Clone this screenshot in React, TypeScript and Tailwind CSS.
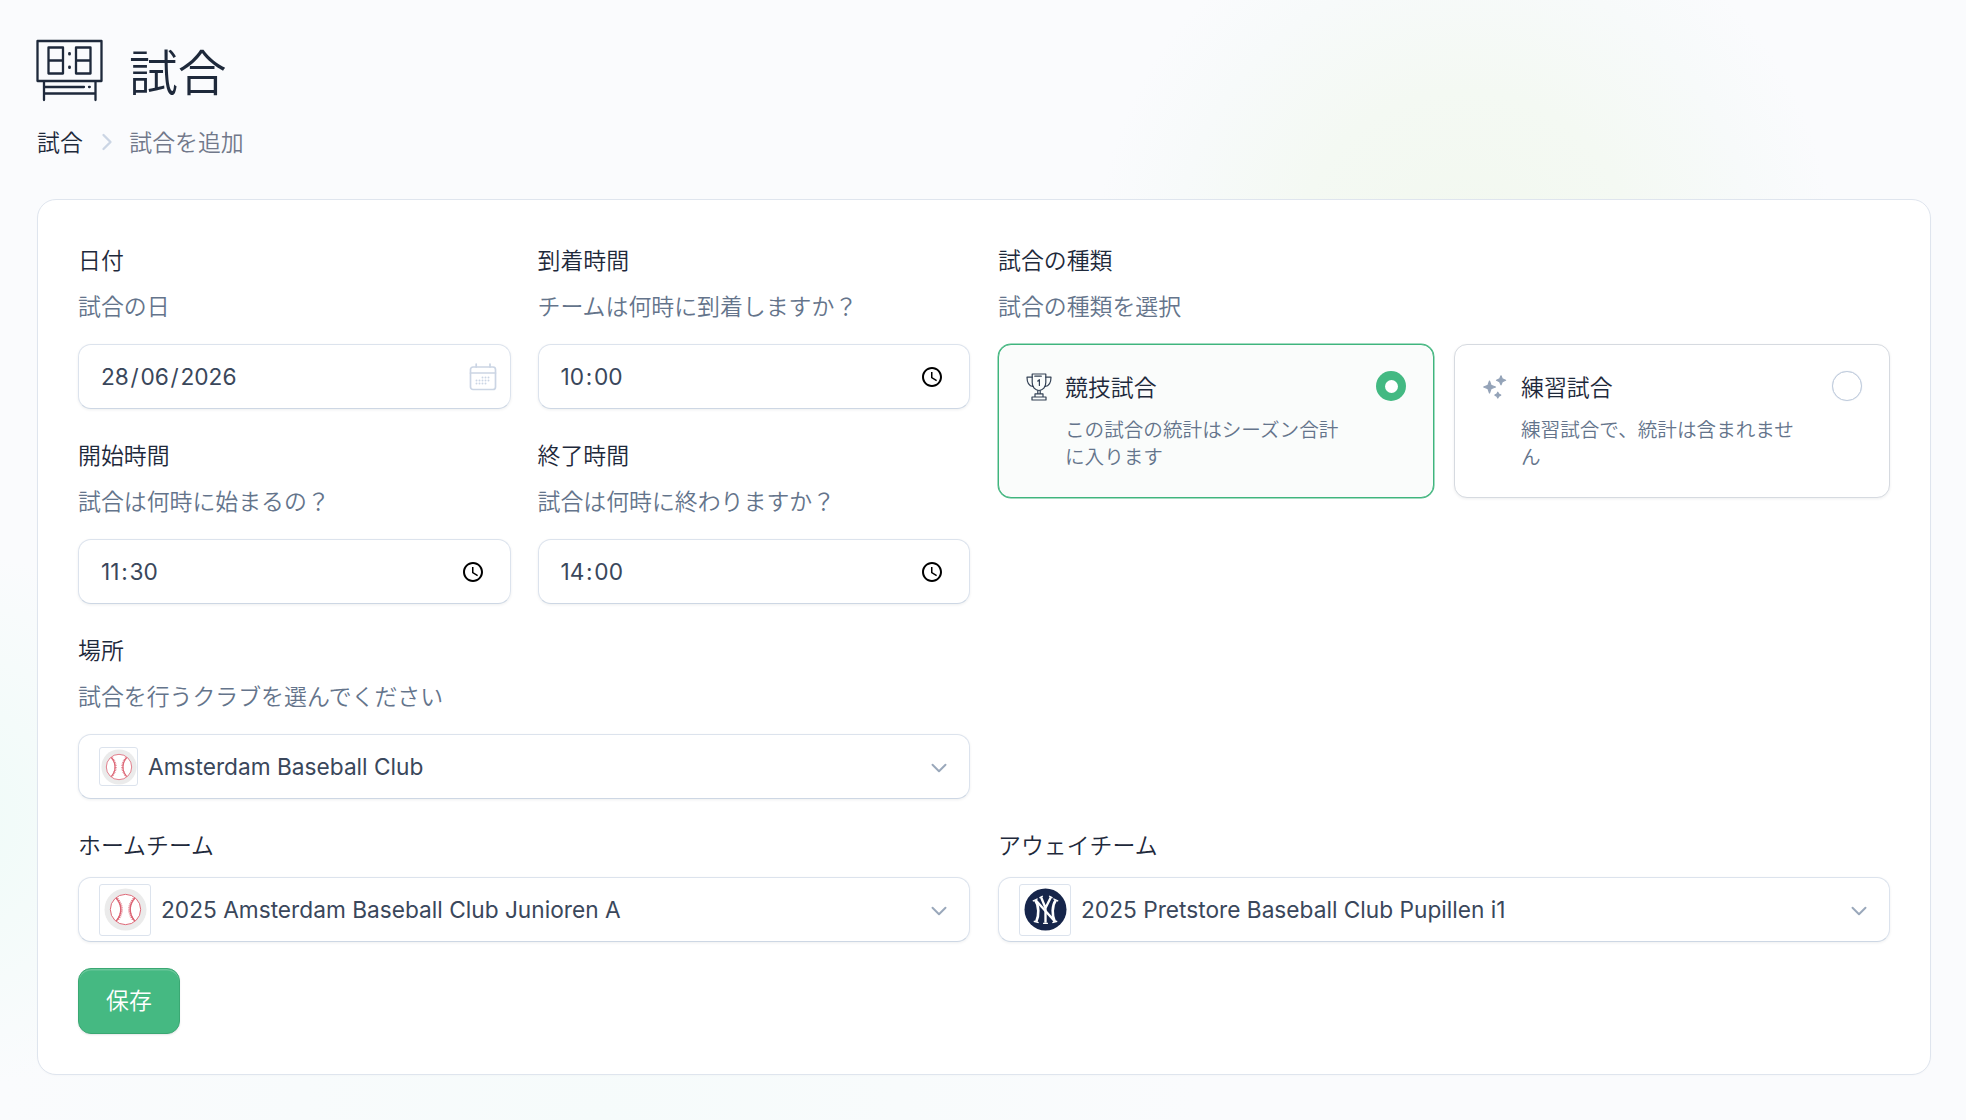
import type { ReactNode } from "react";
import { ChevronDown, ChevronRight } from "lucide-react";

const cjk = "font-['Noto_Sans_CJK_JP',sans-serif] font-[350]";
const box =
  "flex h-[65px] items-center rounded-[13px] border border-[#dce3ed] border-b-[#cdd7e4] bg-white text-[22.700px] text-[#3a475b] shadow-[0_1px_3px_rgba(15,23,42,0.07)]";

function ScoreboardIcon() {
  return (
    <svg width="68" height="64" viewBox="0 0 68 64" fill="none" stroke="#1e293b" strokeWidth="2.300" strokeLinecap="round" strokeLinejoin="round" className="relative -left-px">
      <path d="M1.500 2h64v40H1.500zM8 42v19M59.500 42v19M8 54.500h51.500" />
      <path d="M9 48h39M53 48h.8" />
      <path d="M12.500 8.500h14.500v26H12.500zM12.500 21.500H27M40 8.500h14.500v26H40zM40 21.500h14.500" />
      <path d="M33.500 14.300v.9M33.500 27.800v.9" strokeWidth="2.800" />
    </svg>
  );
}

function ClockIcon() {
  return (
    <svg width="24" height="24" viewBox="0 0 24 24" fill="#000">
      <path d="M11.990 2C6.470 2 2 6.480 2 12s4.470 10 9.990 10C17.520 22 22 17.520 22 12S17.520 2 11.990 2zM12 20c-4.420 0-8-3.580-8-8s3.580-8 8-8 8 3.580 8 8-3.580 8-8 8z" />
      <path d="M12.500 7H11v6l5.250 3.150.75-1.230-4.500-2.670z" />
    </svg>
  );
}

const dots = [
  [13.5, 14.5], [16.5, 14.5], [19.5, 14.5],
  [7.5, 17.5], [10.5, 17.5], [13.5, 17.5], [16.5, 17.5], [19.5, 17.5],
  [7.5, 20.5], [10.5, 20.5], [13.5, 20.5], [16.5, 20.5],
];

function CalendarIcon() {
  return (
    <svg width="28" height="28" viewBox="0 0 28 28" fill="none" stroke="#cbd5e4" strokeWidth="1.700" strokeLinecap="round">
      <rect x="1.5" y="4" width="25" height="22.5" rx="2.5" />
      <path d="M1.500 10h25M7.200 1v3M21 1v3" />
      {dots.map(([x, y]) => (
        <circle key={`${x}-${y}`} cx={x} cy={y} r="0.950" fill="#cbd5e4" stroke="none" />
      ))}
    </svg>
  );
}

function TrophyIcon() {
  return (
    <svg width="26" height="28" viewBox="0 0 26 28" fill="none" stroke="#334155" strokeWidth="1.200" strokeLinecap="round" strokeLinejoin="round">
      <path d="M6.200 1h13.600v8.500c0 4.600-2.800 8-6.800 8s-6.800-3.400-6.800-8z" />
      <path d="M6.200 4.200H1c0 5 2 8.800 6 9.300M19.800 4.200H25c0 5-2 8.800-6 9.300" />
      <path d="M8.800 3.200h6.500M11.800 17.600v3.200M14.200 17.600v3.200M9 24v-3.100h8V24M6 27v-3h14v3z" />
      <path d="M11.800 8l1.600-1.300v5.800" />
    </svg>
  );
}

function SparklesIcon() {
  return (
    <svg width="24" height="24" viewBox="0 0 24 24" fill="#94a3b8" stroke="#94a3b8" strokeWidth="1.200" strokeLinejoin="round">
      <path d="M6.500 6l1.600 4.400 4.400 1.600-4.400 1.600L6.500 18l-1.600-4.400L.7 12l4.200-1.600z" />
      <path d="M18 .8l1.300 3.100 3.300 1.300-3.300 1.500L18 9.800l-1.400-3.100-3.100-1.500 3.100-1.300z" />
      <path d="M14.800 17.200l1 1.900 1.900 1-1.900 1-1 1.900-1-1.900-1.900-1 1.900-1z" />
    </svg>
  );
}

function BaseballLogo({ size }: { size: number }) {
  return (
    <svg width={size} height={size} viewBox="0 0 44 44" fill="none">
      <circle cx="22" cy="22" r="21.500" fill="#ebebeb" />
      <circle cx="22" cy="22" r="15.500" fill="#fff" stroke="#dc6474" strokeWidth="1" />
      <path d="M12.500 10.200c6.200 7 6.200 16.600 0 23.600M31.500 10.200c-6.200 7-6.200 16.600 0 23.600" stroke="#dc6474" strokeWidth="1.400" />
      <path d="M13.500 11c5.900 7 5.900 15 0 22M30.500 11c-5.900 7-5.900 15 0 22" stroke="#dc6474" strokeWidth="2.600" strokeDasharray="0.900 1.100" />
    </svg>
  );
}

function YankeesLogo() {
  return (
    <svg width="43" height="43" viewBox="0 0 44 44" fill="none">
      <circle cx="22" cy="22" r="21.500" fill="#16254a" />
      <g stroke="#fff" strokeLinecap="butt" strokeLinejoin="miter">
        <path d="M11.500 12.500c4 5.500 4 15.500 1 22M32.500 12.500c-4 5.500-4 15.500-1 22" strokeWidth="2.700" />
        <path d="M12 12.500L31.500 34" strokeWidth="2.500" />
        <path d="M17.500 9.500L22 20.500v15M27.500 9.500L22 20.500" strokeWidth="2.400" />
        <path d="M9 13.500l5-2.500M30 11l5 2.500M10 34l5 1.500M29 35.500l5-1.500M19.500 36.200h5M15.800 10l3.500-1.800M25.700 8.200l3.500 1.800" strokeWidth="1.400" />
      </g>
    </svg>
  );
}

function Field({ label, hint, children }: { label: string; hint?: string; children: ReactNode }) {
  return (
    <div className="flex flex-col">
      <div className={`h-10 text-[22.900px] leading-[38px] text-[#1e293b] ${cjk}`}>{label}</div>
      {hint ? (
        <div className={`mt-1.5 mb-[18px] h-10 text-[22.900px] leading-[38px] text-[#64748b] ${cjk}`}>{hint}</div>
      ) : (
        <div className="h-3" />
      )}
      {children}
    </div>
  );
}

function Segments({ parts, separator }: { parts: string[]; separator: string }) {
  return (
    <span className="flex pt-px">
      {parts.map((part, i) => (
        <span key={i} className="flex">
          {i > 0 && <span className="px-[1.700px]">{separator}</span>}
          {part}
        </span>
      ))}
    </span>
  );
}

function TimeBox({ parts }: { parts: string[] }) {
  return (
    <div className={`${box} justify-between pr-[25px] pl-[22px] font-[Inter,sans-serif]`}>
      <Segments parts={parts} separator=":" />
      <ClockIcon />
    </div>
  );
}

function SelectBox({ logo, large, children }: { logo: ReactNode; large?: boolean; children: ReactNode }) {
  return (
    <div className={`${box} pr-[18px] pl-5 font-[Inter,sans-serif]`}>
      <span className={`flex shrink-0 items-center justify-center rounded-[3px] border border-[#dce3ed] ${large ? "size-[52px]" : "size-[39px]"}`}>{logo}</span>
      <span className="ml-[10px] flex-1 pt-px">{children}</span>
      <ChevronDown size={26} color="#9aa8bb" strokeWidth={1.800} className="relative top-px -mr-px" />
    </div>
  );
}

function RadioCard({ icon, title, text, checked }: { icon: ReactNode; title: string; text: string; checked?: boolean }) {
  return (
    <div className={`flex h-[154px] items-start rounded-[13px] pt-[26px] pr-[27px] pl-[26px] ${checked ? "border border-[#3fb57d] bg-[#fafcfb] shadow-[0_0_0_0.500px_#48b883]" : "border border-[#d6dae0] bg-white shadow-[0_1px_3px_rgba(15,23,42,0.07)]"}`}>
      <span className="flex h-[32px] w-[27px] items-center justify-center">{icon}</span>
      <div className={`ml-[13px] flex-1 ${cjk}`}>
        <div className="h-8 text-[22.900px] leading-[30px] text-[#1e293b]">{title}</div>
        <div className="mt-[13px] w-[280px] text-[19.600px] leading-[26.500px] break-all text-[#64748b]">{text}</div>
      </div>
      {checked ? (
        <span className="flex size-[30px] items-center justify-center rounded-full bg-[#43b982]">
          <span className="size-[13px] rounded-full bg-white" />
        </span>
      ) : (
        <span className="size-[30px] rounded-full border border-[#bfcbdc] bg-white shadow-[0_0_1px_#cbd5e4]" />
      )}
    </div>
  );
}

export default function App() {
  return (
    <main lang="ja" className="h-[1120px] w-[1966px] overflow-hidden bg-[#fafbfd] bg-[radial-gradient(circle_at_1465px_260px,#f2f8ef_0px,#f4f9f3_170px,#f7fafa_290px,transparent_370px),radial-gradient(circle_at_-60px_820px,#effbf8_0px,#f4fbfa_120px,transparent_270px),radial-gradient(ellipse_at_600px_1120px,#f6fbfb_0px,transparent_600px)] pt-[38px] pr-[35px] pl-[37px]">
      <header className="flex h-[66px] items-center">
        <ScoreboardIcon />
        <h1 className={`ml-6 h-[66px] text-[48.800px] leading-[63px] text-[#1e293b] ${cjk}`}>試合</h1>
      </header>
      <nav className={`mt-[17px] flex h-10 items-center text-[22.900px] ${cjk}`}>
        <span className="text-[#1e293b]">試合</span>
        <ChevronRight size={28} color="#cbd5e4" strokeWidth={2} className="relative top-px mr-[8.500px] ml-[10px]" />
        <span className="text-[#71788a]">試合を追加</span>
      </nav>
      <section className="mt-[38px] h-[876px] rounded-[19px] border border-[#dfe5ee] bg-white px-[40px] pt-[40px] shadow-[0_1px_2px_rgba(15,23,42,0.02)]">
        <div className="grid grid-cols-2 gap-x-[28px]">
          <div className="grid grid-cols-2 gap-x-[27px] gap-y-[26px]">
            <Field label="日付" hint="試合の日">
              <div className={`${box} justify-between pr-[13px] pl-[22px] font-[Inter,sans-serif]`}>
                <Segments parts={["28", "06", "2026"]} separator="/" />
                <CalendarIcon />
              </div>
            </Field>
            <Field label="到着時間" hint="チームは何時に到着しますか？"><TimeBox parts={["10", "00"]} /></Field>
            <Field label="開始時間" hint="試合は何時に始まるの？"><TimeBox parts={["11", "30"]} /></Field>
            <Field label="終了時間" hint="試合は何時に終わりますか？"><TimeBox parts={["14", "00"]} /></Field>
            <div className="col-span-2">
              <Field label="場所" hint="試合を行うクラブを選んでください">
                <SelectBox logo={<BaseballLogo size={36} />}>Amsterdam Baseball Club</SelectBox>
              </Field>
            </div>
          </div>
          <Field label="試合の種類" hint="試合の種類を選択">
            <div className="grid grid-cols-2 gap-x-5">
              <RadioCard checked icon={<TrophyIcon />} title="競技試合" text="この試合の統計はシーズン合計に入ります" />
              <RadioCard icon={<SparklesIcon />} title="練習試合" text="練習試合で、統計は含まれません" />
            </div>
          </Field>
        </div>
        <div className="mt-[26px] grid grid-cols-2 gap-x-[28px]">
          <Field label="ホームチーム">
            <SelectBox large logo={<BaseballLogo size={43} />}>2025 Amsterdam Baseball Club Junioren A</SelectBox>
          </Field>
          <Field label="アウェイチーム">
            <SelectBox large logo={<YankeesLogo />}>2025 Pretstore Baseball Club Pupillen i1</SelectBox>
          </Field>
        </div>
        <button className={`mt-[26px] flex h-[66px] w-[102px] items-center justify-center rounded-[13px] border border-[#3aa873] bg-[#45b982] pb-[3px] text-[22.900px] text-white shadow-[inset_0_1.500px_0_rgba(255,255,255,0.2),0_1px_2px_rgba(15,23,42,0.1)] ${cjk}`}>
          保存
        </button>
      </section>
    </main>
  );
}
